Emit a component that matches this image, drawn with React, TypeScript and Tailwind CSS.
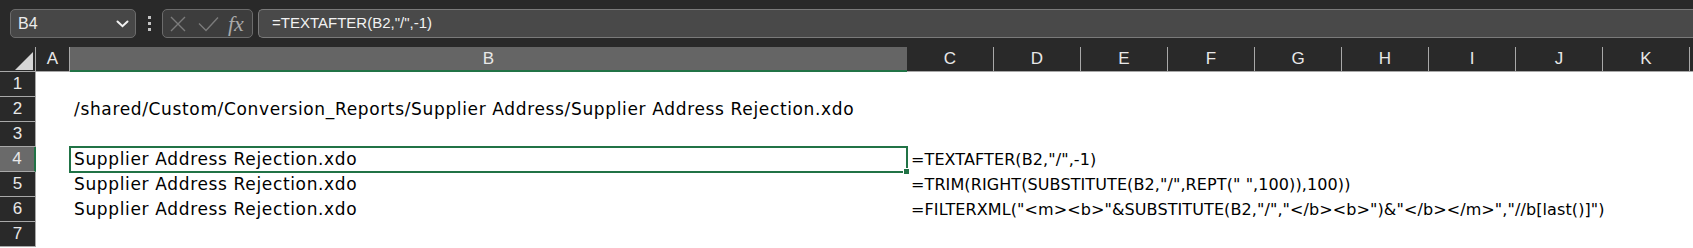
import React from 'react'

const COLS = ['C', 'D', 'E', 'F', 'G', 'H', 'I', 'J', 'K']

const ROWS: { b?: string; c?: string }[] = [
  {},
  { b: '/shared/Custom/Conversion_Reports/Supplier Address/Supplier Address Rejection.xdo' },
  {},
  { b: 'Supplier Address Rejection.xdo', c: '=TEXTAFTER(B2,"/",-1)' },
  { b: 'Supplier Address Rejection.xdo', c: '=TRIM(RIGHT(SUBSTITUTE(B2,"/",REPT(" ",100)),100))' },
  {
    b: 'Supplier Address Rejection.xdo',
    c: '=FILTERXML("<m><b>"&SUBSTITUTE(B2,"/","</b><b>")&"</b></m>","//b[last()]")',
  },
  {},
]

const SELECTED_ROW = 4

export default function App() {
  return (
    <div className="w-[1693px] h-[248px] overflow-hidden bg-white font-['Liberation_Sans',sans-serif]">
      {/* Formula bar */}
      <div className="flex h-[47px] items-center bg-[#292929] pl-[10px]">
        <div className="flex h-[29px] w-[126px] items-center justify-between rounded-[5px] border border-[#6c6c6c] bg-[#474747] pl-[7px] pr-[6px]">
          <span className="text-[16px] text-[#ececec]">B4</span>
          <svg width="13" height="8" viewBox="0 0 13 8">
            <path d="M1.5 1.5 L6.5 6.2 L11.5 1.5" fill="none" stroke="#f2f2f2" strokeWidth="2" strokeLinecap="round" />
          </svg>
        </div>
        <div className="ml-[11px] flex w-[4px] flex-col items-center gap-[3px]">
          <span className="h-[3px] w-[3px] bg-[#c4c4c4]" />
          <span className="h-[3px] w-[3px] bg-[#c4c4c4]" />
          <span className="h-[3px] w-[3px] bg-[#c4c4c4]" />
        </div>
        <div className="ml-[11px] flex h-[29px] w-[91px] items-center rounded-[5px] border border-[#6c6c6c] bg-[#3d3d3d] pl-[7px]">
          <svg width="16" height="16" viewBox="0 0 16 16">
            <path d="M1 1 L15 15 M15 1 L1 15" stroke="#7b7b7b" strokeWidth="1.4" />
          </svg>
          <svg className="ml-[12px]" width="21" height="16" viewBox="0 0 21 16">
            <path d="M1 7.5 L8 14.5 L20 1.5" fill="none" stroke="#7b7b7b" strokeWidth="1.4" />
          </svg>
          <span className="ml-[9px] font-['Liberation_Serif',serif] text-[22px] italic leading-none text-[#a9a9a9]">fx</span>
        </div>
        <div className="ml-[5px] flex h-[29px] flex-1 items-center rounded-l-[5px] border border-r-0 border-[#7a7a7a] bg-[#494949] pl-[13px]">
          <span className="text-[15px] text-[#f2f2f2]">=TEXTAFTER(B2,"/",-1)</span>
        </div>
      </div>

      {/* Column headers */}
      <div className="flex h-[25px] bg-[#292929] text-[17px] text-[#e8e8e8]">
        <div className="flex w-[36px] items-end justify-end border-r border-b border-[#a8a8a8] pr-[2px] pb-[1px]">
          <svg width="18" height="18" viewBox="0 0 18 18">
            <path d="M18 0 L18 18 L0 18 Z" fill="#d6d6d6" />
          </svg>
        </div>
        <div className="flex w-[34px] items-center justify-center border-r border-b border-[#a8a8a8]">A</div>
        <div className="flex w-[837px] items-center justify-center border-b-2 border-[#217346] bg-[#656565]">B</div>
        {COLS.map(c => (
          <div key={c} className="flex w-[87px] items-center justify-center border-r border-b border-[#a8a8a8]">
            {c}
          </div>
        ))}
        <div className="flex-1 border-b border-[#a8a8a8]" />
      </div>

      {/* Rows */}
      {ROWS.map((row, i) => {
        const n = i + 1
        const selected = n === SELECTED_ROW
        return (
          <div key={n} className="flex h-[25px]">
            <div
              className={`flex w-[36px] items-center justify-center border-b border-[#a8a8a8] text-[17px] text-[#e8e8e8] ${
                selected ? 'border-r-2 border-r-[#217346] bg-[#6a6a6a]' : 'border-r bg-[#292929]'
              }`}
            >
              {n}
            </div>
            <div className="w-[34px]" />
            <div className="relative w-[837px] whitespace-nowrap pl-[4px] font-['DejaVu_Sans',sans-serif] text-[17px] leading-[25px] tracking-[0.65px] text-black">
              {row.b}
              {selected && (
                <div className="absolute -left-[1px] -top-[1px] -right-[1px] -bottom-[1px] border-2 border-[#217346]">
                  <div className="absolute -right-[4px] -bottom-[4px] h-[7px] w-[7px] border border-white bg-[#217346]" />
                </div>
              )}
            </div>
            <div className="flex-1 whitespace-nowrap pl-[4px] font-['DejaVu_Sans',sans-serif] text-[16px] leading-[25px] tracking-[0.1px] text-black">
              {row.c}
            </div>
          </div>
        )
      })}
    </div>
  )
}
